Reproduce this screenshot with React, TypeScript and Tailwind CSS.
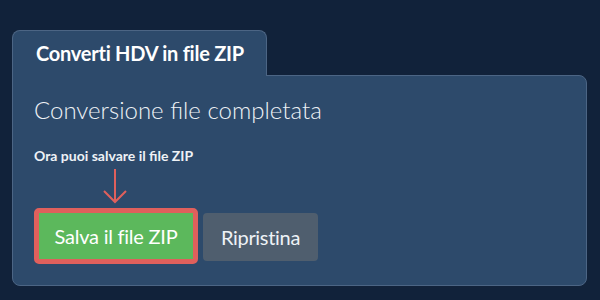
export default function App() {
  return (
    <div
      className="h-[300px] w-[600px] bg-[#11223a] pl-[12px] pr-[13px] pt-[30px]"
      style={{ fontFamily: "Lato, 'Open Sans', sans-serif" }}
    >
      <div className="flex flex-col">
        <div className="relative z-10 -mb-px w-[255px] rounded-t-lg border border-b-0 border-[#4c6584] bg-[#2d4a6b] pl-[23px] pt-[10px] pb-[11px]">
          <span className="block text-[20px] leading-[24px] font-bold tracking-[-0.25px] text-white">
            Converti HDV in file ZIP
          </span>
        </div>
        <div className="h-[211px] rounded-b-lg rounded-tr-lg border border-[#4c6584] bg-[#2d4a6b] pl-[21px] pt-[19px]">
          <h1 className="text-[24px] leading-[29px] font-light text-[#eef2f6]">
            Conversione file completata
          </h1>
          <p className="mt-[22px] text-[14px] leading-[20px] font-bold text-[#eef2f6]">
            Ora puoi salvare il file ZIP
          </p>
          <div className="flex h-[42px] w-[164px] items-start justify-center pt-[3px]">
            <svg width="30" height="36" viewBox="0 0 30 36" fill="none" className="-ml-[2px]">
              <path d="M15 0 V33" stroke="#e0605c" strokeWidth="2" />
              <path d="M4 22 L15 33 L26 22" stroke="#e0605c" strokeWidth="2" />
            </svg>
          </div>
          <div className="flex items-start gap-[5px]">
            <button className="h-[56px] w-[164px] rounded-[5px] border-[5px] border-[#e0605c] bg-[#5cb85c] text-[20px] font-normal tracking-[-0.25px] text-white">
              Salva il file ZIP
            </button>
            <button className="mt-[5px] h-[48px] w-[115px] rounded-[4px] bg-[#4f5e6e] text-[20px] font-normal tracking-[-0.3px] text-[#eef2f6]">
              Ripristina
            </button>
          </div>
        </div>
      </div>
    </div>
  );
}
